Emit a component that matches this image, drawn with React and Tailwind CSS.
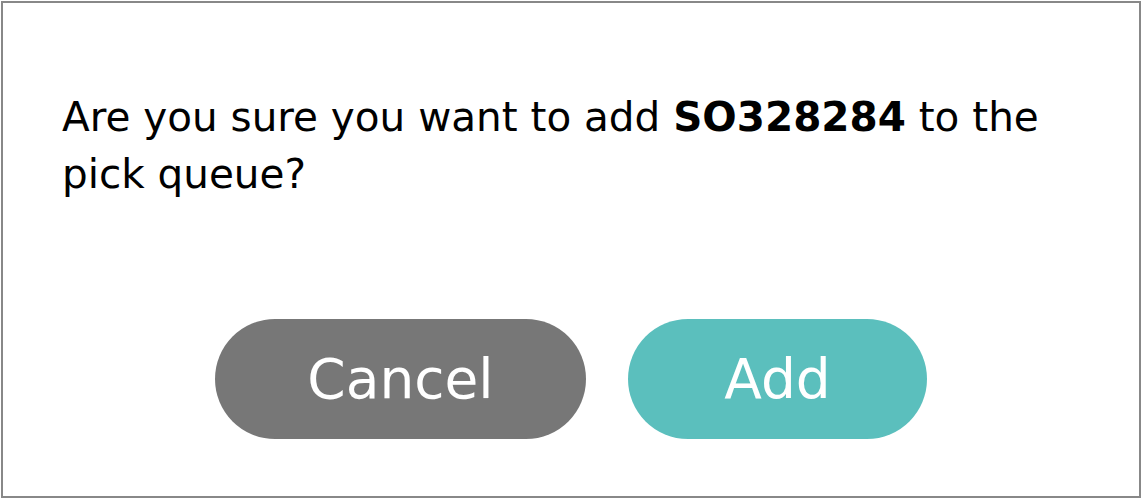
export default function App() {
  return (
    <div className="w-[1142px] h-[500px] p-px bg-white" style={{ fontFamily: '"DejaVu Sans", sans-serif' }}>
      <div className="h-[497px] border-2 border-[#888888] bg-white flex flex-col">
        <p className="pl-[59px] pr-[60px] pt-[86px] text-[40.5px] leading-[57px] text-black">
          Are you sure you want to add <span className="font-bold">SO328284</span> to the pick queue?
        </p>

        <div className="mt-auto mb-[57px] flex justify-center gap-[42px]">
          <button className="w-[371px] h-[120px] rounded-full bg-[#777777] text-white text-[55px]">
            Cancel
          </button>
          <button className="w-[299px] h-[120px] rounded-full bg-[#5bbfbd] text-white text-[55px]">
            Add
          </button>
        </div>
      </div>
    </div>
  );
}
